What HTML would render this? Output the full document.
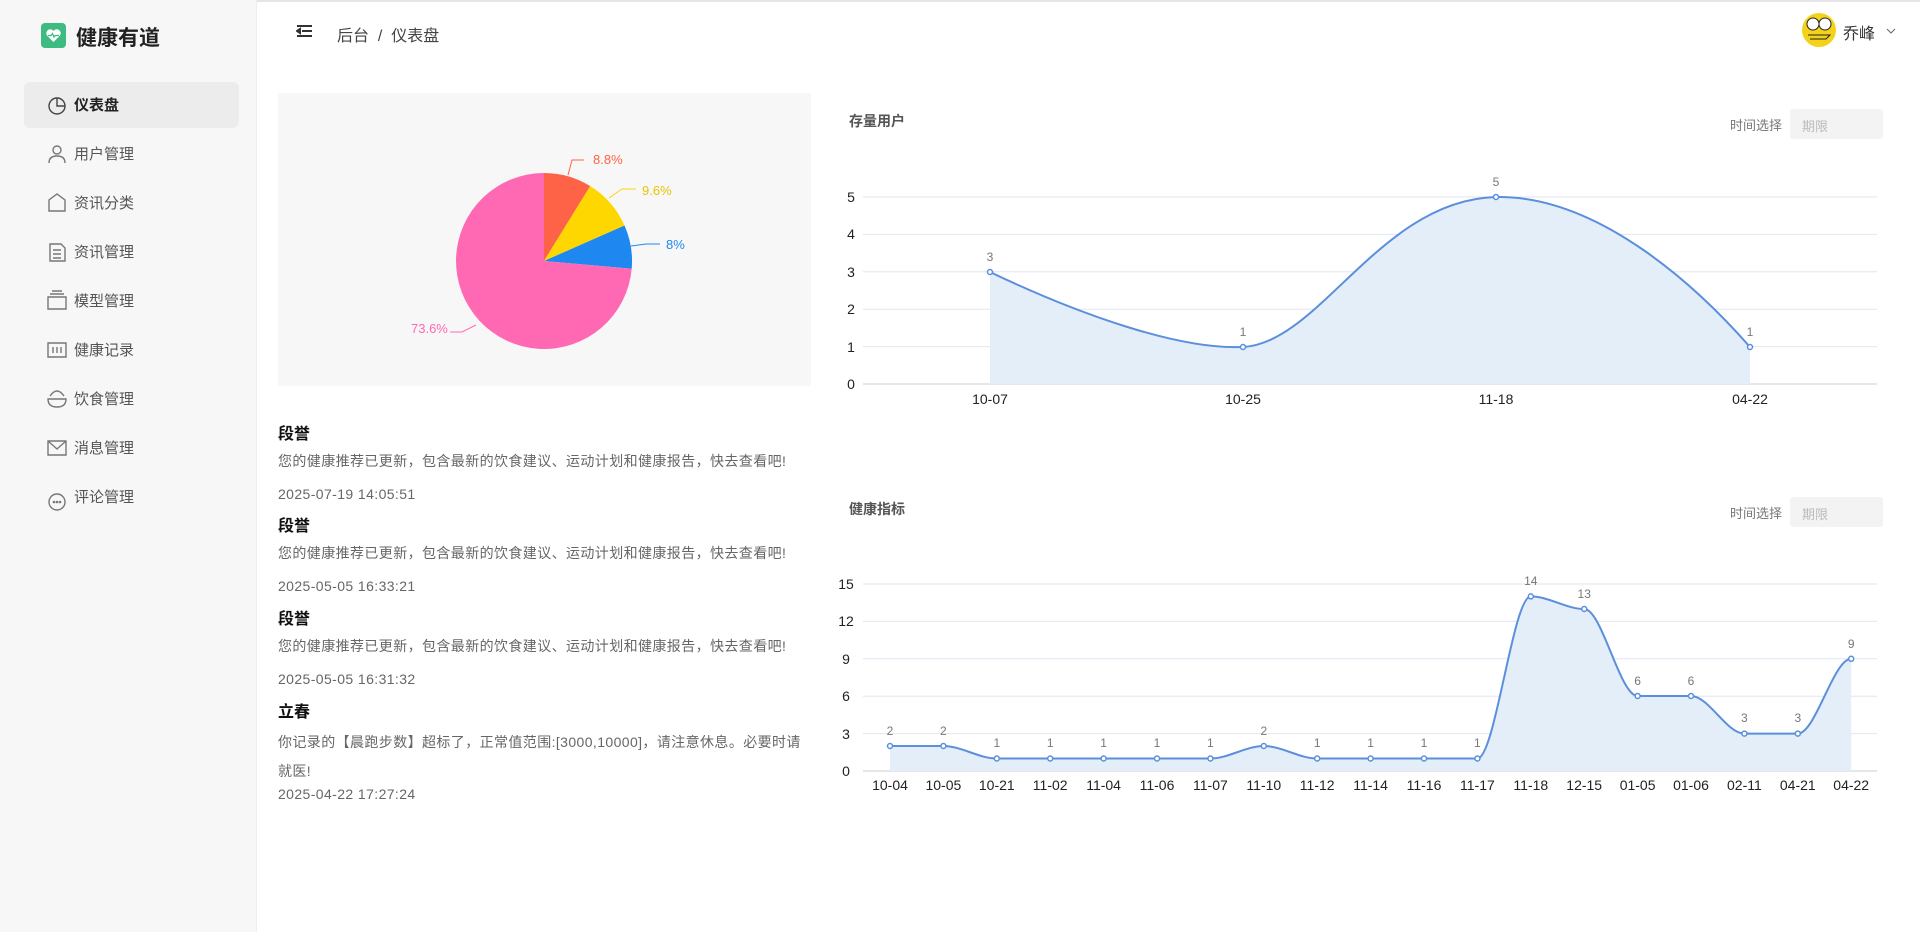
<!DOCTYPE html>
<html><head><meta charset="utf-8"><style>
*{margin:0;padding:0;box-sizing:border-box}
body{width:1920px;height:932px;overflow:hidden;background:#fff;font-family:"Liberation Sans","Noto Sans CJK SC",sans-serif;position:relative;color:#333}
.abs{position:absolute}
#side{left:0;top:0;width:257px;height:932px;background:#f7f7f7;border-right:1px solid #eee}
.logo{left:41px;top:23px;width:25px;height:25px;background:#3dbb80;border-radius:4px}
.brand{left:76px;top:22px;font-size:21px;font-weight:bold;color:#222}
.active{left:24px;top:82px;width:215px;height:46px;background:#ececec;border-radius:6px}
.mi{left:74px;font-size:15px;color:#555;line-height:20px}
.msg{left:278px;font-size:14px;color:#666;letter-spacing:0.4px}
.nm{left:278px;font-size:16px;font-weight:bold;color:#111}
.sel{width:93px;height:30px;background:#f3f3f3;border-radius:3px;font-size:13px;color:#bbb;padding:7px 12px}
.sl{font-size:13px;color:#777}
</style></head><body>
<div class="abs" style="left:0;top:0;width:1920px;height:2px;background:#e5e5e5"></div>
<div id="side" class="abs"></div>
<div class="abs logo"><svg width="25" height="25" viewBox="0 0 25 25"><path d="M12.5 19 L6 12.5 A3.5 3.5 0 0 1 12.5 8 A3.5 3.5 0 0 1 19 12.5 Z" fill="#fff"/><path d="M7 12.5 H10 L11.5 10.5 L13 14 L14.3 12.5 H18" stroke="#3dbb80" stroke-width="1.3" fill="none"/></svg></div>
<div class="abs brand">健康有道</div>
<div class="abs active"></div>
<svg class="abs" style="left:0;top:0" width="257" height="932" fill="none" stroke="#444" stroke-width="1.4">
<circle cx="57" cy="106" r="8"/><path d="M57 98 V106 H65"/>
<g stroke="#777"><circle cx="57" cy="150" r="4"/><path d="M49 163 Q49 156 57 156 Q65 156 65 163"/>
<path d="M49 211 V200 L57 194 L65 200 V211 Z"/>
<path d="M50 244 H61 L65 248 V261 H50 Z M53 250 H61 M53 254 H61 M53 258 H61"/>
<path d="M48 297 H66 V309 H48 Z M50 294 H64 M52 291 H62"/>
<path d="M48 343 H66 V357 H48 Z M53 347 V353 M57 347 V353 M61 347 V353"/>
<path d="M48 399 H66 Q66 407 57 407 Q48 407 48 399 Z M50 396 Q57 386 64 396"/>
<path d="M48 441 H66 V455 H48 Z M48 441 L57 449 L66 441"/>
<circle cx="57" cy="502" r="8"/><circle cx="54" cy="502" r=".6"/><circle cx="57" cy="502" r=".6"/><circle cx="60" cy="502" r=".6"/></g>
</svg>
<div class="abs mi" style="top:96px;color:#222;font-weight:bold">仪表盘</div>
<div class="abs mi" style="top:145px">用户管理</div>
<div class="abs mi" style="top:194px">资讯分类</div>
<div class="abs mi" style="top:243px">资讯管理</div>
<div class="abs mi" style="top:292px">模型管理</div>
<div class="abs mi" style="top:341px">健康记录</div>
<div class="abs mi" style="top:390px">饮食管理</div>
<div class="abs mi" style="top:439px">消息管理</div>
<div class="abs mi" style="top:488px">评论管理</div>

<svg class="abs" style="left:296px;top:24px" width="18" height="16"><path d="M1 2 H16 M6 7 H16 M1 12 H16 M1 7 L4 5 V9 Z" stroke="#333" stroke-width="2" fill="#333"/></svg>
<div class="abs" style="left:337px;top:22px;font-size:16px;color:#444">后台 &nbsp;/&nbsp; 仪表盘</div>
<svg class="abs" style="left:1800px;top:12px" width="38" height="36"><circle cx="19" cy="18" r="17" fill="#f5d21a"/><circle cx="13" cy="12" r="6" fill="#fff" stroke="#222"/><circle cx="25" cy="12" r="6" fill="#fff" stroke="#222"/><path d="M8 23 H30 L26 27 H10" stroke="#222" fill="none"/></svg>
<div class="abs" style="left:1843px;top:20px;font-size:16px;color:#333">乔峰</div>
<svg class="abs" style="left:1886px;top:28px" width="10" height="8"><path d="M1 1 L5 5 L9 1" stroke="#666" fill="none"/></svg>

<div class="abs" style="left:278px;top:93px;width:533px;height:293px;background:#f7f7f7"></div>
<svg class="abs" style="left:0;top:0" width="1920" height="932">
<path d="M544 261 L544 173 A88 88 0 0 1 590.2 186.1 Z" fill="#ff6347"/>
<path d="M544 261 L590.2 186.1 A88 88 0 0 1 624.5 225.5 Z" fill="#ffd700"/>
<path d="M544 261 L624.5 225.5 A88 88 0 0 1 631.7 268.7 Z" fill="#1e88f0"/>
<path d="M544 261 L631.7 268.7 A88 88 0 1 1 544 173 Z" fill="#ff69b4"/>
<path d="M568 175 L572 160 H584" stroke="#ff6347" fill="none"/>
<path d="M609 198 L622 189 H636" stroke="#ffd700" fill="none"/>
<path d="M631 246 L646 244 H660" stroke="#1e88f0" fill="none"/>
<path d="M476 325 L462 332 H450" stroke="#ff69b4" fill="none"/>
<g font-size="13" font-family="Liberation Sans,sans-serif">
<text x="593" y="164" fill="#ff6347">8.8%</text><text x="642" y="195" fill="#e8c400">9.6%</text>
<text x="666" y="249" fill="#1e88f0">8%</text><text x="411" y="333" fill="#ff69b4">73.6%</text></g>

<g stroke="#e0e6f1"><path d="M863 197 H1877 M863 234.4 H1877 M863 271.8 H1877 M863 309.2 H1877 M863 346.6 H1877"/><path d="M863 384 H1877" stroke="#ccc"/>
<path d="M863 584 H1877 M863 621.4 H1877 M863 658.8 H1877 M863 696.2 H1877 M863 733.6 H1877"/><path d="M863 771 H1877" stroke="#ccc"/></g>
<path d="M990 272 C1080 315 1180 350 1243 347 C1320 343 1380 200 1496 197 C1600 195 1700 290 1750 347 L1750 384 L990 384 Z" fill="#e3eef9"/>
<path d="M990 272 C1080 315 1180 350 1243 347 C1320 343 1380 200 1496 197 C1600 195 1700 290 1750 347" stroke="#5b8fdc" stroke-width="2" fill="none"/>
<g fill="#fff" stroke="#5b8fdc" stroke-width="1.5"><circle cx="990" cy="272" r="2.5"/><circle cx="1243" cy="347" r="2.5"/><circle cx="1496" cy="197" r="2.5"/><circle cx="1750" cy="347" r="2.5"/></g>
<g font-size="12" fill="#777" text-anchor="middle"><text x="990" y="261">3</text><text x="1243" y="336">1</text><text x="1496" y="186">5</text><text x="1750" y="336">1</text></g>
<g font-size="14" fill="#222" text-anchor="middle"><text x="851" y="202">5</text><text x="851" y="239">4</text><text x="851" y="277">3</text><text x="851" y="314">2</text><text x="851" y="352">1</text><text x="851" y="389">0</text>
<text x="990" y="404">10-07</text><text x="1243" y="404">10-25</text><text x="1496" y="404">11-18</text><text x="1750" y="404">04-22</text></g>

<path d="M890,746 C907.8,746 925.6,746 943.4,746 C961.2,746 979,758.5 996.8,758.5 C1014.6,758.5 1032.4,758.5 1050.2,758.5 C1068,758.5 1085.8,758.5 1103.6,758.5 C1121.4,758.5 1139.2,758.5 1157,758.5 C1174.8,758.5 1192.6,758.5 1210.4,758.5 C1228.2,758.5 1246,746 1263.8,746 C1281.6,746 1299.4,758.5 1317.2,758.5 C1335,758.5 1352.8,758.5 1370.6,758.5 C1388.4,758.5 1406.2,758.5 1424,758.5 C1441.8,758.5 1459.6,758.5 1477.4,758.5 C1495.2,758.5 1513,596.4 1530.8,596.4 C1548.6,596.4 1566.4,609 1584.2,609 C1602,609 1619.8,696 1637.6,696 C1655.4,696 1673.2,696 1691,696 C1708.8,696 1726.6,733.6 1744.4,733.6 C1762.2,733.6 1780,733.6 1797.8,733.6 C1815.6,733.6 1833.4,658.8 1851.2,658.8 L1851.2,771 L890,771 Z" fill="#e3eef9"/>
<path d="M890,746 C907.8,746 925.6,746 943.4,746 C961.2,746 979,758.5 996.8,758.5 C1014.6,758.5 1032.4,758.5 1050.2,758.5 C1068,758.5 1085.8,758.5 1103.6,758.5 C1121.4,758.5 1139.2,758.5 1157,758.5 C1174.8,758.5 1192.6,758.5 1210.4,758.5 C1228.2,758.5 1246,746 1263.8,746 C1281.6,746 1299.4,758.5 1317.2,758.5 C1335,758.5 1352.8,758.5 1370.6,758.5 C1388.4,758.5 1406.2,758.5 1424,758.5 C1441.8,758.5 1459.6,758.5 1477.4,758.5 C1495.2,758.5 1513,596.4 1530.8,596.4 C1548.6,596.4 1566.4,609 1584.2,609 C1602,609 1619.8,696 1637.6,696 C1655.4,696 1673.2,696 1691,696 C1708.8,696 1726.6,733.6 1744.4,733.6 C1762.2,733.6 1780,733.6 1797.8,733.6 C1815.6,733.6 1833.4,658.8 1851.2,658.8" stroke="#5b8fdc" stroke-width="2" fill="none"/>
<g fill="#fff" stroke="#5b8fdc" stroke-width="1.5">
<circle cx="890" cy="746" r="2.5"/><circle cx="943.4" cy="746" r="2.5"/><circle cx="996.8" cy="758.5" r="2.5"/><circle cx="1050.2" cy="758.5" r="2.5"/><circle cx="1103.6" cy="758.5" r="2.5"/><circle cx="1157" cy="758.5" r="2.5"/><circle cx="1210.4" cy="758.5" r="2.5"/><circle cx="1263.8" cy="746" r="2.5"/><circle cx="1317.2" cy="758.5" r="2.5"/><circle cx="1370.6" cy="758.5" r="2.5"/><circle cx="1424" cy="758.5" r="2.5"/><circle cx="1477.4" cy="758.5" r="2.5"/><circle cx="1530.8" cy="596.4" r="2.5"/><circle cx="1584.2" cy="609" r="2.5"/><circle cx="1637.6" cy="696" r="2.5"/><circle cx="1691" cy="696" r="2.5"/><circle cx="1744.4" cy="733.6" r="2.5"/><circle cx="1797.8" cy="733.6" r="2.5"/><circle cx="1851.2" cy="658.8" r="2.5"/></g>
<g font-size="12" fill="#777" text-anchor="middle">
<text x="890" y="735">2</text><text x="943.4" y="735">2</text><text x="996.8" y="747">1</text><text x="1050.2" y="747">1</text><text x="1103.6" y="747">1</text><text x="1157" y="747">1</text><text x="1210.4" y="747">1</text><text x="1263.8" y="735">2</text><text x="1317.2" y="747">1</text><text x="1370.6" y="747">1</text><text x="1424" y="747">1</text><text x="1477.4" y="747">1</text><text x="1530.8" y="585">14</text><text x="1584.2" y="598">13</text><text x="1637.6" y="685">6</text><text x="1691" y="685">6</text><text x="1744.4" y="722">3</text><text x="1797.8" y="722">3</text><text x="1851.2" y="648">9</text></g>
<g font-size="14" fill="#222" text-anchor="middle">
<text x="846" y="589">15</text><text x="846" y="626">12</text><text x="846" y="664">9</text><text x="846" y="701">6</text><text x="846" y="739">3</text><text x="846" y="776">0</text>
<text x="890" y="790">10-04</text><text x="943.4" y="790">10-05</text><text x="996.8" y="790">10-21</text><text x="1050.2" y="790">11-02</text><text x="1103.6" y="790">11-04</text><text x="1157" y="790">11-06</text><text x="1210.4" y="790">11-07</text><text x="1263.8" y="790">11-10</text><text x="1317.2" y="790">11-12</text><text x="1370.6" y="790">11-14</text><text x="1424" y="790">11-16</text><text x="1477.4" y="790">11-17</text><text x="1530.8" y="790">11-18</text><text x="1584.2" y="790">12-15</text><text x="1637.6" y="790">01-05</text><text x="1691" y="790">01-06</text><text x="1744.4" y="790">02-11</text><text x="1797.8" y="790">04-21</text><text x="1851.2" y="790">04-22</text></g>
<path d="M1858 122 L1863 127 L1868 122 M1858 510 L1863 515 L1868 510" stroke="#aaa" fill="none"/>
</svg>

<div class="abs" style="left:849px;top:111px;font-size:14px;font-weight:bold;color:#555">存量用户</div>
<div class="abs sl" style="left:1730px;top:115px">时间选择</div>
<div class="abs sel" style="left:1790px;top:109px">期限</div>
<div class="abs" style="left:849px;top:499px;font-size:14px;font-weight:bold;color:#555">健康指标</div>
<div class="abs sl" style="left:1730px;top:503px">时间选择</div>
<div class="abs sel" style="left:1790px;top:497px">期限</div>

<div class="abs nm" style="top:420px">段誉</div>
<div class="abs msg" style="top:451px">您的健康推荐已更新，包含最新的饮食建议、运动计划和健康报告，快去查看吧!</div>
<div class="abs msg" style="top:486px">2025-07-19 14:05:51</div>
<div class="abs nm" style="top:512px">段誉</div>
<div class="abs msg" style="top:543px">您的健康推荐已更新，包含最新的饮食建议、运动计划和健康报告，快去查看吧!</div>
<div class="abs msg" style="top:578px">2025-05-05 16:33:21</div>
<div class="abs nm" style="top:605px">段誉</div>
<div class="abs msg" style="top:636px">您的健康推荐已更新，包含最新的饮食建议、运动计划和健康报告，快去查看吧!</div>
<div class="abs msg" style="top:671px">2025-05-05 16:31:32</div>
<div class="abs nm" style="top:698px">立春</div>
<div class="abs msg" style="top:728px;width:525px;line-height:29px">你记录的【晨跑步数】超标了，正常值范围:[3000,10000]，请注意休息。必要时请就医!</div>
<div class="abs msg" style="top:786px">2025-04-22 17:27:24</div>
</body></html>
